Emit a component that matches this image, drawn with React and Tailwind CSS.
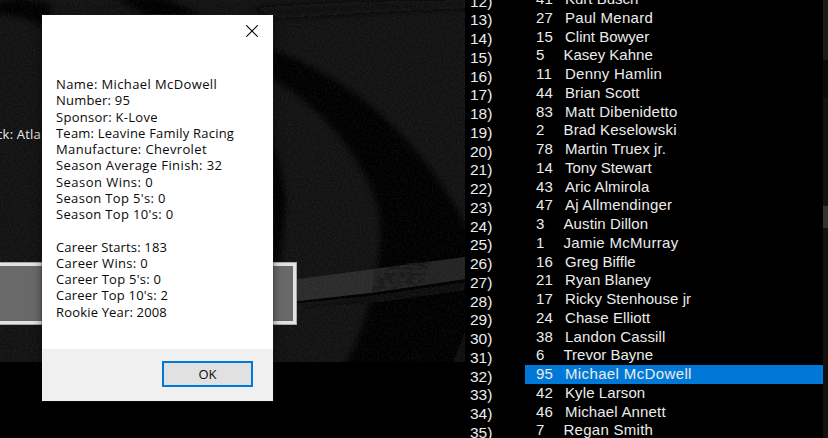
const details = [
  ['Name: Michael McDowell', 'tracking-[0.39px]'],
  ['Number: 95', 'tracking-[0.2px]'],
  ['Sponsor: K-Love', 'tracking-[0.28px]'],
  ['Team: Leavine Family Racing', 'tracking-[0.21px]'],
  ['Manufacture: Chevrolet', 'tracking-[0.36px]'],
  ['Season Average Finish: 32', 'tracking-[0.4px]'],
  ['Season Wins: 0', 'tracking-[0.46px]'],
  ["Season Top 5's: 0", 'tracking-[0.33px]'],
  ["Season Top 10's: 0", 'tracking-[0.33px]'],
  ['', ''],
  ['Career Starts: 183', 'tracking-[0.16px]'],
  ['Career Wins: 0', 'tracking-[0.3px]'],
  ["Career Top 5's: 0", 'tracking-[0.24px]'],
  ["Career Top 10's: 2", 'tracking-[0.2px]'],
  ['Rookie Year: 2008', 'tracking-[0.17px]'],
];

const drivers = [
  [12, 41, 'Kurt Busch', ''],
  [13, 27, 'Paul Menard', 'tracking-[0.27px]'],
  [14, 15, 'Clint Bowyer', ''],
  [15, 5, 'Kasey Kahne', ''],
  [16, 11, 'Denny Hamlin', 'tracking-[0.25px]'],
  [17, 44, 'Brian Scott', 'tracking-[0.1px]'],
  [18, 83, 'Matt Dibenidetto', 'tracking-[0.2px]'],
  [19, 2, 'Brad Keselowski', 'tracking-[0.15px]'],
  [20, 78, 'Martin Truex jr.', 'tracking-[0.12px]'],
  [21, 14, 'Tony Stewart', ''],
  [22, 43, 'Aric Almirola', 'tracking-[0.08px]'],
  [23, 47, 'Aj Allmendinger', 'tracking-[0.2px]'],
  [24, 3, 'Austin Dillon', 'tracking-[0.1px]'],
  [25, 1, 'Jamie McMurray', 'tracking-[0.3px]'],
  [26, 16, 'Greg Biffle', ''],
  [27, 21, 'Ryan Blaney', 'tracking-[0.08px]'],
  [28, 17, 'Ricky Stenhouse jr', 'tracking-[0.06px]'],
  [29, 24, 'Chase Elliott', 'tracking-[0.08px]'],
  [30, 38, 'Landon Cassill', 'tracking-[0.15px]'],
  [31, 6, 'Trevor Bayne', ''],
  [32, 95, 'Michael McDowell', 'tracking-[0.37px]'],
  [33, 42, 'Kyle Larson', 'tracking-[0.1px]'],
  [34, 46, 'Michael Annett', 'tracking-[0.17px]'],
  [35, 7, 'Regan Smith', 'tracking-[0.27px]'],
];

function Asphalt() {
  return (
    <svg className="absolute left-0 top-0" width="466" height="362" viewBox="0 0 466 362" aria-hidden="true">
      <defs>
        <filter id="grain" x="0" y="0" width="100%" height="100%">
          <feTurbulence type="fractalNoise" baseFrequency="0.5" numOctaves="3" seed="4" />
          <feColorMatrix values="0 0 0 0 1  0 0 0 0 1  0 0 0 0 1  1.2 1.2 0 0 -0.95" />
        </filter>
        <filter id="specks" x="0" y="0" width="100%" height="100%">
          <feTurbulence type="fractalNoise" baseFrequency="0.14 0.3" numOctaves="2" seed="9" />
          <feColorMatrix values="0 0 0 0 0.01  0 0 0 0 0.01  0 0 0 0 0.01  12 0 0 0 -5.4" />
        </filter>
        <filter id="soft"><feGaussianBlur stdDeviation="3" /></filter>
        <filter id="edge"><feGaussianBlur stdDeviation="0.7" /></filter>
        <clipPath id="worn"><path d="M387 268L404 264L430 261L424 282L398 288L370 291L378 282L374 279Z" /></clipPath>
        <clipPath id="photo"><rect width="465" height="362" /></clipPath>
      </defs>
      <g clipPath="url(#photo)">
        <rect width="466" height="362" fill="#121212" />
        <g filter="url(#soft)">
          <path d="M250 8L350 2L470 0V8L380 12L280 18Z" fill="#0c0c0c" />
          <path d="M-6 4L20 -2L50 4V30L30 20L-6 12Z" fill="#030303" />
          <path d="M112 -4L160 -4L205 17H150Z" fill="#030303" />
          <path d="M265 47C300 58 345 82 385 118C420 152 445 185 462 218L474 240V372H340C368 330 384 262 379 214C372 174 330 108 265 75Z" fill="#020202" />
          <path d="M268 130L280 165L286 200L280 262H268Z" fill="#060606" />
          <path d="M474 300L462 340L450 370H474Z" fill="#0d0d0d" />
        </g>
        <path d="M290 280L466 257V279L380 292L290 303Z" fill="#292929" filter="url(#edge)" />
        <path d="M374 270L466 257V279L372 292Z" fill="#232323" filter="url(#edge)" />
        <g clipPath="url(#worn)">
          <rect width="466" height="362" filter="url(#specks)" />
        </g>
        <path d="M290 302L370 293L466 279V282L380 295L290 304Z" fill="#060606" filter="url(#edge)" />
        <path d="M370 296L466 282V290L380 302L300 308Z" fill="#0e0e0e" filter="url(#edge)" />
        <rect width="466" height="362" filter="url(#grain)" opacity="0.06" />
      </g>
    </svg>
  );
}

function DriverDialog() {
  return (
    <section className="absolute left-[42px] top-[15px] flex h-[386px] w-[231px] flex-col bg-white text-[#0a0a0a] shadow-[0_0_1px_#333,0_2px_9px_rgba(0,0,0,0.5)]">
      <header className="flex h-[61px] justify-end pr-[15px] pt-[10px]">
        <svg width="12" height="12" viewBox="0 0 12 12" aria-label="Close">
          <path d="M0.3 0.3L11.7 11.7M11.7 0.3L0.3 11.7" stroke="#000" strokeWidth="1.1" />
        </svg>
      </header>
      <div className="flex-1 pl-[14px] font-['Open_Sans',sans-serif] text-[13px]">
        {details.map(([line, tracking], i) => (
          <p key={i} className={`h-[16.25px] whitespace-pre leading-[16.25px] ${tracking}`}>{line}</p>
        ))}
      </div>
      <footer className="flex h-[52px] justify-end bg-[#f0f0f0] pr-[20px] pt-[12px]">
        <button className="h-[26px] w-[91px] border-2 border-[#0078d7] bg-[#e1e1e1] pt-px font-['Open_Sans',sans-serif] text-[13px] leading-[21px]">OK</button>
      </footer>
    </section>
  );
}

function Standings() {
  return (
    <ol className="mt-[-10px] flex w-[357px] flex-col bg-black font-['Liberation_Sans',sans-serif] text-[15px] text-[#ececec]">
      {drivers.map(([rank, number, name, tracking]) => (
        <li key={rank} className="flex h-[18.75px] shrink-0 leading-[18.75px]">
          <span className="w-[59px] pl-[4px] pt-[2.5px] text-[15.5px]">{rank})</span>
          <span className={number === 95 ? 'flex flex-1 bg-[#0078d7] pl-[11px]' : 'flex flex-1 pl-[11px]'}>
            <span className={number < 10 ? 'w-[27.5px] tracking-[0.2px]' : 'w-[29px] tracking-[0.2px]'}>{number}</span>
            <span className={`whitespace-nowrap ${tracking}`}>{name}</span>
          </span>
        </li>
      ))}
    </ol>
  );
}

export default function App() {
  return (
    <main className="relative flex h-[438px] w-[828px] overflow-hidden bg-black">
      <Asphalt />
      <div className="relative w-[466px] shrink-0 font-['Open_Sans',sans-serif]">
        <p className="flex w-[41px] justify-end overflow-hidden whitespace-nowrap pt-[126px] text-[13px] leading-4 tracking-[0.2px] text-[#e8e8e8]">ck: Atla</p>
        <div className="mt-[120px] h-[63px] w-[297px] border border-l-0 border-[#a8a8a8]">
          <div className="h-full border-[3px] border-l-0 border-[#e2e2e2] bg-[#696969]" />
        </div>
        <DriverDialog />
      </div>
      <Standings />
      <div className="flex w-[5px] flex-col bg-[#14120f]">
        <div className="h-[60px] bg-[#1c1b19]" />
        <div className="h-[38px] bg-[#0b0a09]" />
        <div className="mt-[108px] h-[22px] bg-[#333230]" />
      </div>
    </main>
  );
}
